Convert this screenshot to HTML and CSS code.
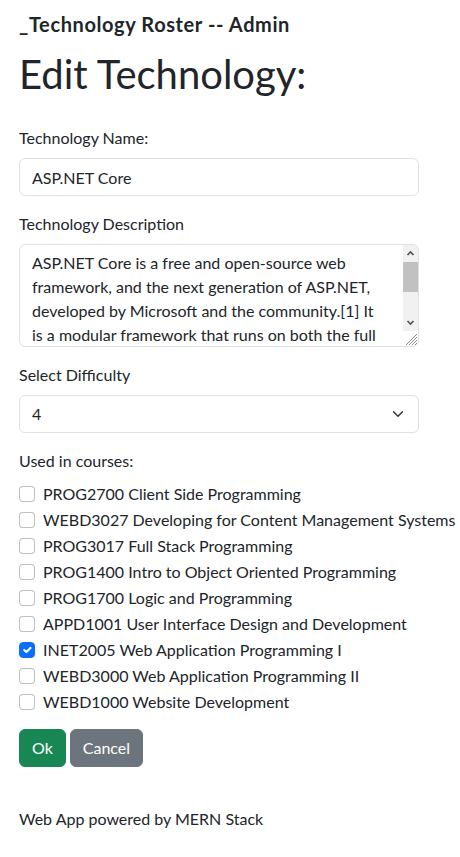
FILE: index.html
```html
<!DOCTYPE html>
<html lang="en">
<head>
<meta charset="utf-8">
<title>Edit Technology</title>
<link rel="stylesheet" href="styles.css">
</head>
<body>
<div class="page">
  <div class="brand">_Technology Roster -- Admin</div>
  <h1 class="title">Edit Technology:</h1>
  <form class="form">
    <div class="group">
      <label class="label" for="name">Technology Name:</label>
      <input class="control" id="name" type="text" value="ASP.NET Core">
    </div>
    <div class="group">
      <label class="label" for="desc">Technology Description</label>
      <div class="area-wrap">
        <textarea class="area" id="desc">ASP.NET Core is a free and open-source web framework, and the next generation of ASP.NET, developed by Microsoft and the community.[1] It is a modular framework that runs on both the full .NET Framework, on Windows, and the cross-platform .NET Core.</textarea>
        <div class="vscroll" aria-hidden="true">
          <span class="sb-btn"><svg width="15" height="17" viewBox="0 0 15 17"><path d="M4.5 10 7.5 7 10.5 10" fill="none" stroke="#505050" stroke-width="1.6"/></svg></span>
          <span class="sb-track"><span class="sb-thumb"></span></span>
          <span class="sb-btn"><svg width="15" height="17" viewBox="0 0 15 17"><path d="M4.5 7 7.5 10 10.5 7" fill="none" stroke="#505050" stroke-width="1.6"/></svg></span>
          <span class="sb-grip"><svg width="15" height="15" viewBox="0 0 15 15"><path d="M14 3 3 14M14 6 6 14M14 9 9 14M14 12 12 14" fill="none" stroke="#8a8a8a" stroke-width="1"/></svg></span>
        </div>
      </div>
    </div>
    <div class="group">
      <label class="label" for="diff">Select Difficulty</label>
      <select class="control select" id="diff">
        <option>1</option>
        <option>2</option>
        <option>3</option>
        <option selected>4</option>
        <option>5</option>
      </select>
    </div>
    <div class="group checks">
      <div class="label">Used in courses:</div>
      <label class="check"><input type="checkbox" class="box"><span>PROG2700 Client Side Programming</span></label>
      <label class="check"><input type="checkbox" class="box"><span>WEBD3027 Developing for Content Management Systems</span></label>
      <label class="check"><input type="checkbox" class="box"><span>PROG3017 Full Stack Programming</span></label>
      <label class="check"><input type="checkbox" class="box"><span>PROG1400 Intro to Object Oriented Programming</span></label>
      <label class="check"><input type="checkbox" class="box"><span>PROG1700 Logic and Programming</span></label>
      <label class="check"><input type="checkbox" class="box"><span>APPD1001 User Interface Design and Development</span></label>
      <label class="check"><input type="checkbox" class="box" checked><span>INET2005 Web Application Programming I</span></label>
      <label class="check"><input type="checkbox" class="box"><span>WEBD3000 Web Application Programming II</span></label>
      <label class="check"><input type="checkbox" class="box"><span>WEBD1000 Website Development</span></label>
    </div>
    <div class="buttons">
      <button type="button" class="btn ok">Ok</button>
      <button type="button" class="btn cancel">Cancel</button>
    </div>
  </form>
  <footer class="footer">Web App powered by MERN Stack</footer>
</div>
</body>
</html>
```
FILE: styles.css
```css
* { box-sizing: border-box; }
html, body { margin: 0; padding: 0; background: #fff; }
body {
  font-family: "Segoe UI", Lato, "Open Sans", sans-serif;
  font-size: 16px;
  line-height: 24px;
  color: #212529;
}
.page { padding: 12px 0 0 19px; }
.brand { font-size: 20px; font-weight: 700; line-height: 24px; letter-spacing: 0.6px; }
.title { font-size: 40px; font-weight: 400; line-height: 48px; margin: 14px 0 28px; }
.form { width: 400px; margin: 0; }
.group { margin-bottom: 16px; }
.label { display: block; margin-bottom: 8px; }
.control {
  display: block;
  width: 100%;
  height: 38px;
  padding: 6px 12px;
  font: inherit;
  color: #212529;
  background: #fff;
  border: 1px solid #dee2e6;
  border-radius: 6px;
  outline: none;
}
.area-wrap {
  display: flex;
  height: 103px;
  border: 1px solid #dee2e6;
  border-radius: 6px;
  overflow: hidden;
  background: #fff;
}
.area {
  flex: 1;
  min-width: 0;
  border: 0;
  margin: 0;
  padding: 6px 20px 6px 12px;
  font: inherit;
  line-height: 24px;
  color: #212529;
  resize: none;
  overflow: hidden;
  outline: none;
  background: transparent;
}
.vscroll {
  flex: none;
  width: 15px;
  display: flex;
  flex-direction: column;
}
.sb-btn { display: block; height: 17px; background: #f1f1f1; }
.sb-btn svg { display: block; }
.sb-track { flex: 1; display: block; background: #f1f1f1; }
.sb-thumb { display: block; height: 30px; background: #c1c1c1; }
.sb-grip { display: block; height: 15px; background: #fff; }
.sb-grip svg { display: block; }
.select {
  appearance: none;
  -webkit-appearance: none;
  padding-right: 36px;
  background: #fff url("data:image/svg+xml,%3Csvg xmlns='http://www.w3.org/2000/svg' viewBox='0 0 16 16'%3E%3Cpath fill='none' stroke='%23343a40' stroke-linecap='round' stroke-linejoin='round' stroke-width='2' d='m2 5 6 6 6-6'/%3E%3C/svg%3E") no-repeat right 12px center / 16px 12px;
}
.checks { margin-bottom: 15px; }
.checks .label { margin-bottom: 9px; }
.check {
  display: flex;
  align-items: center;
  gap: 8px;
  height: 24px;
  margin-bottom: 2px;
  white-space: nowrap;
}
.box {
  appearance: none;
  -webkit-appearance: none;
  flex: none;
  width: 16px;
  height: 16px;
  margin: 0;
  border: 1px solid rgba(0,0,0,.25);
  border-radius: 4px;
  background: #fff;
}
.box:checked {
  background: #0d6efd url("data:image/svg+xml,%3Csvg xmlns='http://www.w3.org/2000/svg' viewBox='0 0 20 20'%3E%3Cpath fill='none' stroke='%23fff' stroke-linecap='round' stroke-linejoin='round' stroke-width='3' d='m6 10 3 3 6-6'/%3E%3C/svg%3E") no-repeat center / 100% 100%;
  border-color: #0d6efd;
}
.buttons { display: flex; gap: 4px; }
.btn {
  font: inherit;
  line-height: 24px;
  padding: 6px 12px;
  height: 38px;
  border: 1px solid transparent;
  border-radius: 6px;
  color: #fff;
}
.ok { background: #198754; border-color: #198754; }
.cancel { background: #6c757d; border-color: #6c757d; }
.footer { margin-top: 40px; }
```
